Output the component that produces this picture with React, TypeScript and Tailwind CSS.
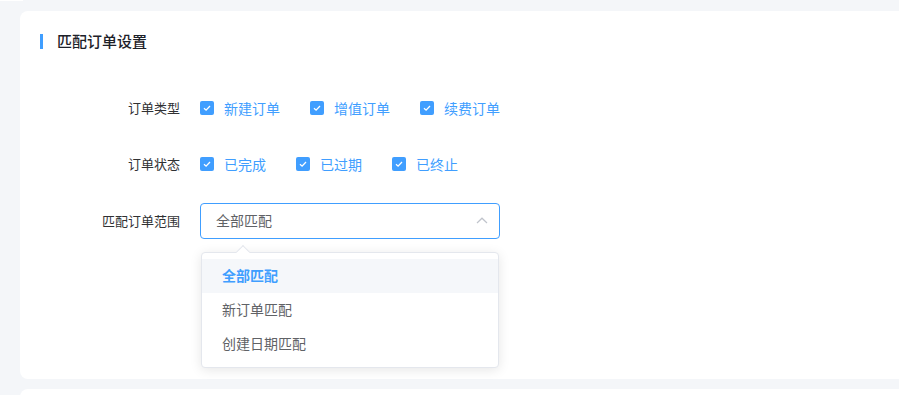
const cjk = { fontFamily: '"Noto Sans CJK SC", "Noto Sans", sans-serif' };

function Check({ label }: { label: string }) {
  return (
    <label className="flex items-center gap-[10px]">
      <span className="flex h-[14px] w-[14px] items-center justify-center rounded-[2px] bg-[#409eff]">
        <svg viewBox="0 0 14 14" className="h-[14px] w-[14px]">
          <path d="M4 7.2 L6.1 9.2 L10 5" fill="none" stroke="#fff" strokeWidth="1.3" />
        </svg>
      </span>
      <span className="text-[14px] text-[#409eff]">{label}</span>
    </label>
  );
}

function FormRow({ label, children }: { label: string; children: React.ReactNode }) {
  return (
    <div className="flex items-center">
      <div className="w-[160px] pr-5 text-right text-[13px] text-[#303133]">{label}</div>
      {children}
    </div>
  );
}

export default function App() {
  const options = ['全部匹配', '新订单匹配', '创建日期匹配'];
  return (
    <div className="min-h-[395px] bg-[#f4f6f9] pl-5" style={cjk}>
      <div className="-ml-5 h-px w-[23px] bg-white" />
      <div className="mt-[10px] h-[368px] rounded-l-lg bg-white pl-5 pt-[19px]">
        <div className="flex items-center gap-[14px]">
          <span className="h-[15px] w-[3px] bg-[#409eff]" />
          <h2 className="text-[15px] font-medium text-[#1d2129]">匹配订单设置</h2>
        </div>

        <div className="mt-[45px] flex flex-col">
          <FormRow label="订单类型">
            <div className="flex gap-[30px]">
              <Check label="新建订单" />
              <Check label="增值订单" />
              <Check label="续费订单" />
            </div>
          </FormRow>
          <div className="mt-[35px]">
            <FormRow label="订单状态">
              <div className="flex gap-[30px]">
                <Check label="已完成" />
                <Check label="已过期" />
                <Check label="已终止" />
              </div>
            </FormRow>
          </div>
          <div className="mt-[28px]">
            <FormRow label="匹配订单范围">
              <div className="relative w-[300px]">
                <div className="flex h-[36px] items-center justify-between rounded-[4px] border border-[#409eff] pl-[15px] pr-[10px]">
                  <span className="text-[14px] text-[#606266]">全部匹配</span>
                  <svg viewBox="0 0 12 7" className="mr-px h-[7px] w-[12px]">
                    <path d="M1 6 L6 1.2 L11 6" fill="none" stroke="#c0c4cc" strokeWidth="1.2" />
                  </svg>
                </div>
                <div className="absolute left-px top-[49px] z-10 w-[298px] rounded-[4px] border border-[#e4e7ed] bg-white py-[6px] shadow-[0_2px_12px_0_rgba(0,0,0,0.1)]">
                  <span className="absolute -top-[6px] left-[36px] h-[10px] w-[10px] rotate-45 border-l border-t border-[#e4e7ed] bg-white" />
                  {options.map((o, i) => (
                    <div
                      key={o}
                      className={`relative flex h-[34px] items-center px-5 text-[14px] ${
                        i === 0 ? 'bg-[#f5f7fa] font-semibold text-[#409eff]' : 'text-[#606266]'
                      }`}
                    >
                      {o}
                    </div>
                  ))}
                </div>
              </div>
            </FormRow>
          </div>
        </div>
      </div>
      <div className="mt-[10px] h-[10px] rounded-tl-lg bg-white" />
    </div>
  );
}
